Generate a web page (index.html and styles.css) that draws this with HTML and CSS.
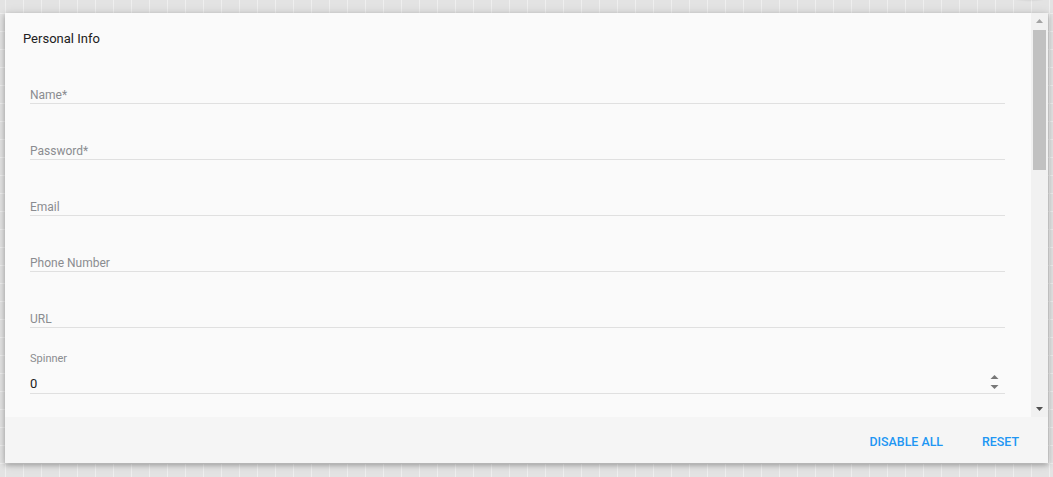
FILE: index.html
```html
<!DOCTYPE html>
<html lang="en">
  <head>
    <meta charset="UTF-8" />
    <meta name="viewport" content="width=device-width, initial-scale=1.0" />
    <title>Personal Info</title>
    <link rel="stylesheet" href="styles.css">
  </head>
  <body>
    <div class="blob"></div>
    <div class="card">
      <div class="body">
        <div class="content">
          <h2 class="title">Personal Info</h2>
          <div class="field"><span class="hint">Name*</span></div>
          <div class="field"><span class="hint">Password*</span></div>
          <div class="field"><span class="hint">Email</span></div>
          <div class="field"><span class="hint">Phone Number</span></div>
          <div class="field"><span class="hint">URL</span></div>
          <div class="field spinner">
            <span class="small-label">Spinner</span>
            <div class="spin-row">
              <span class="value">0</span>
              <span class="arrows">
                <svg width="9" height="16" viewBox="0 0 9 16">
                  <path d="M4.5 1 L8.5 5 L0.5 5 Z" fill="#777" />
                  <path d="M0.5 11 L8.5 11 L4.5 15 Z" fill="#777" />
                </svg>
              </span>
            </div>
          </div>
        </div>
        <div class="scrollbar">
          <svg class="arrow" width="17" height="17" viewBox="0 0 17 17">
            <path d="M8.5 6 L12 10 L5 10 Z" fill="#a3a3a3" />
          </svg>
          <div class="thumb"></div>
          <div class="track"></div>
          <svg class="arrow" width="17" height="17" viewBox="0 0 17 17">
            <path d="M5 7 L12 7 L8.5 11 Z" fill="#505050" />
          </svg>
        </div>
      </div>
      <div class="actions">
        <button>Disable All</button>
        <button>Reset</button>
      </div>
    </div>
  </body>
</html>
```

FILE: styles.css
```css
* {
  margin: 0;
  padding: 0;
  box-sizing: border-box;
  font-family: Roboto, "Liberation Sans", sans-serif;
}
body {
  width: 1053px;
  height: 477px;
  overflow: hidden;
  background-color: #e3e3e3;
  background-image:
    linear-gradient(to right, #efefef 1px, transparent 1px),
    linear-gradient(to bottom, #efefef 1px, transparent 1px);
  background-size: 18px 18px;
  background-position: 5px 13px;
  padding: 13px 5px 0 5px;
  position: relative;
}
.blob {
  position: absolute;
  top: -10px;
  left: 1008px;
  width: 44px;
  height: 12px;
  border-radius: 50%;
  background: radial-gradient(ellipse at center, rgba(0, 0, 0, 0.18), rgba(0, 0, 0, 0) 70%);
}
.card {
  width: 1043px;
  height: 450px;
  background: #fafafa;
  box-shadow: 0 2px 5px rgba(0, 0, 0, 0.26), 0 1px 10px rgba(0, 0, 0, 0.12);
  display: flex;
  flex-direction: column;
  position: relative;
}
.body {
  display: flex;
  height: 404px;
  overflow: hidden;
}
.content {
  flex: 1;
  padding: 0 26px 0 25px;
}
.title {
  font-size: 13px;
  font-weight: 400;
  color: #212121;
  line-height: 16px;
  padding: 18px 0 1px 0;
  margin-left: -7px;
}
.field {
  height: 56px;
  padding-top: 39px;
  border-bottom: 1px solid #e0e0e0;
}
.hint {
  display: block;
  font-size: 12px;
  line-height: 16px;
  color: #8a8c90;
}
.spinner {
  height: 66px;
  padding-top: 24px;
}
.small-label {
  display: block;
  font-size: 11px;
  line-height: 14px;
  color: #8a8c90;
  margin-bottom: 9px;
}
.spin-row {
  display: flex;
  justify-content: space-between;
  align-items: center;
  height: 16px;
}
.value {
  font-size: 13px;
  color: #212121;
}
.arrows {
  display: flex;
  margin-right: 6px;
  margin-top: -2px;
}
.scrollbar {
  width: 17px;
  background: #f1f1f1;
  display: flex;
  flex-direction: column;
}
.arrow {
  display: block;
}
.thumb {
  height: 140px;
  margin: 0 2px;
  background: #c1c1c1;
}
.track {
  flex: 1;
}
.actions {
  flex: 1;
  background: #f5f5f5;
  display: flex;
  justify-content: flex-end;
  align-items: center;
  gap: 23px;
  padding: 3px 21px 0 0;
}
button {
  background: none;
  border: none;
  outline: none;
  padding: 0 8px;
  font-size: 12.4px;
  font-weight: 500;
  text-transform: uppercase;
  color: #2196f3;
  line-height: 16px;
}
```
